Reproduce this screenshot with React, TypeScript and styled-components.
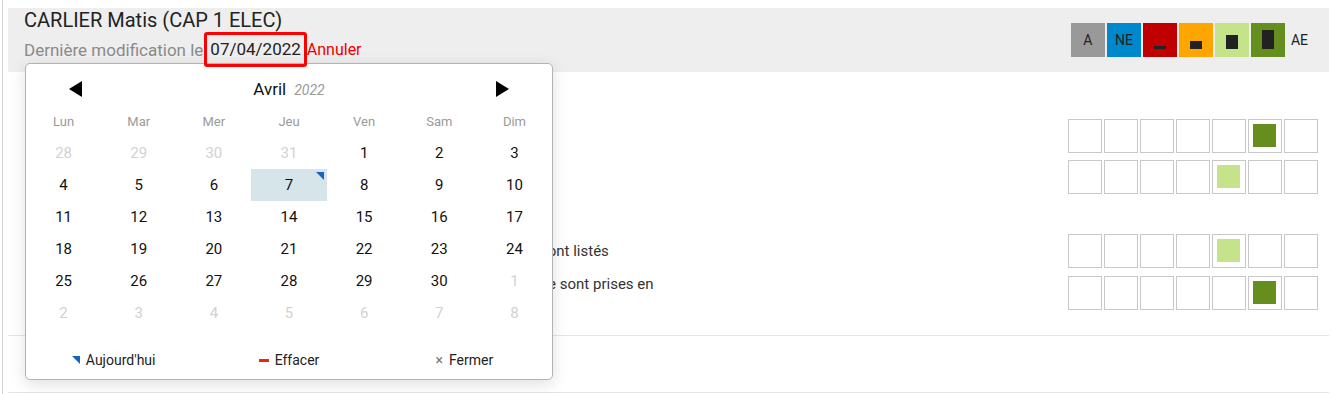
import styled, { createGlobalStyle } from 'styled-components';

const GlobalStyle = createGlobalStyle`
  body {
    margin: 0;
    background: #fff;
    font-family: Roboto, "Liberation Sans", sans-serif;
    color: #222;
  }
`;

const Frame = styled.div`
  margin-left: 2px;
  border-left: 1px solid #d4d4d4;
  padding: 8px 2px 0 5px;
  min-height: 394px;
  box-sizing: border-box;
`;

const Header = styled.header`
  position: relative;
  height: 64px;
  background: #eeeeee;
  display: flex;
  justify-content: space-between;
  padding: 0 21px 0 16px;
`;

const Student = styled.div`
  display: flex;
  flex-direction: column;
`;

const Title = styled.div`
  font-size: 20px;
  line-height: 25px;
  color: #222;
`;

const SubLine = styled.div`
  display: flex;
  align-items: center;
  margin-top: -1px;
  font-size: 17px;
  color: #8a8a8a;
`;

const DateBox = styled.span`
  position: relative;
  z-index: 3;
  margin-left: 1px;
  padding: 0 3px;
  line-height: 29px;
  border: 3px solid #ff0000;
  border-radius: 3px;
  color: #222;
`;

const CancelLink = styled.span`
  font-size: 16px;
  color: #ee0000;
`;

const Legend = styled.div`
  align-self: center;
  display: flex;
  align-items: center;
  gap: 2px;
`;

const LegendBox = styled.div<{ $bg: string }>`
  width: 34px;
  height: 34px;
  background: ${(p) => p.$bg};
  display: flex;
  align-items: center;
  justify-content: center;
  font-size: 14px;
  color: #222;
`;

const LevelBox = styled(LegendBox)`
  align-items: flex-end;
  padding-bottom: 8px;
  box-sizing: border-box;
`;

const LevelBar = styled.span<{ $h: number }>`
  width: 12px;
  height: ${(p) => p.$h}px;
  background: #222;
`;

const LegendText = styled.span`
  margin-left: 4px;
  font-size: 14px;
  color: #222;
`;

/* calendar popup */
const Picker = styled.div`
  position: absolute;
  z-index: 2;
  left: 17px;
  top: 55px;
  width: 528px;
  box-sizing: border-box;
  padding-top: 8px;
  background: #fff;
  border: 1px solid #b3b3b3;
  border-radius: 5px;
  box-shadow: 0 4px 16px rgba(0, 0, 0, 0.13);
`;

const Nav = styled.div`
  height: 34px;
  display: flex;
  align-items: center;
  justify-content: space-between;
  padding: 0 43px;
`;

const Arrow = styled.svg`
  width: 13px;
  height: 16px;
  display: block;
`;

const MonthLabel = styled.div`
  display: flex;
  align-items: baseline;
  gap: 8px;
  font-size: 17px;
  color: #111;
`;

const YearLabel = styled.span`
  font-size: 14px;
  font-style: italic;
  color: #9a9a9a;
`;

const WeekGrid = styled.div`
  display: grid;
  grid-template-columns: repeat(7, 1fr);
`;

const WeekDay = styled.div`
  text-align: center;
  line-height: 31px;
  font-size: 13px;
  color: #9a9a9a;
`;

const Day = styled.div<{ $muted?: boolean; $selected?: boolean }>`
  position: relative;
  height: 32px;
  line-height: 32px;
  text-align: center;
  font-size: 15px;
  color: ${(p) => (p.$muted ? '#d2d2d2' : '#111')};
  background: ${(p) => (p.$selected ? '#d6e5e9' : 'transparent')};
`;

const TodayMark = styled.span`
  display: inline-block;
  width: 0;
  height: 0;
  border-top: 8px solid #1565c0;
  border-left: 8px solid transparent;
`;

const CornerMark = styled(TodayMark)`
  position: absolute;
  top: 3px;
  right: 3px;
`;

const Footer = styled.div`
  display: grid;
  grid-template-columns: repeat(3, 1fr);
  padding: 21px 0 9px;
`;

const FooterItem = styled.div`
  display: flex;
  align-items: center;
  justify-content: center;
  gap: 6px;
  font-size: 14px;
  line-height: 20px;
  color: #222;
`;

const ClearMark = styled.span`
  width: 10px;
  height: 3px;
  background: #e8290b;
`;

const CloseMark = styled.span`
  font-size: 14px;
  color: #777;
`;

/* evaluation grid */
const Section = styled.section<{ $empty?: boolean }>`
  border-bottom: 1px solid #e6e6e6;
  padding: ${(p) => (p.$empty ? '0' : '7px 11px 24px 16px')};
  height: ${(p) => (p.$empty ? '56px' : 'auto')};
`;

const Group = styled.div`
  display: flex;
  flex-direction: column;
  gap: 7px;
`;

const GroupTitle = styled.div`
  height: 33px;
  line-height: 33px;
  padding-left: 16px;
  font-size: 15px;
  font-weight: 500;
  color: #333;
`;

const Row = styled.div`
  display: flex;
  align-items: center;
  min-height: 34px;
  gap: 20px;
`;

const Label = styled.div`
  flex: 1;
  max-width: 630px;
  margin-right: auto;
  padding-left: 18px;
  font-size: 15px;
  line-height: 18px;
  color: #333;
`;

const Cells = styled.div`
  display: flex;
  gap: 2px;
  margin-left: auto;
`;

const Cell = styled.div`
  width: 34px;
  height: 34px;
  box-sizing: border-box;
  border: 1px solid #c8c8c8;
  padding: 4px;
`;

const Fill = styled.div<{ $bg: string }>`
  width: 23px;
  height: 23px;
  background: ${(p) => p.$bg};
`;

const LEVEL_COLORS = ['#999999', '#0088cc', '#c00000', '#ffa500', '#c5e38b', '#668e1e'];

const LEVELS: { bg: string; text?: string; bar?: number }[] = [
  { bg: LEVEL_COLORS[0], text: 'A' },
  { bg: LEVEL_COLORS[1], text: 'NE' },
  { bg: LEVEL_COLORS[2], bar: 3 },
  { bg: LEVEL_COLORS[3], bar: 8 },
  { bg: LEVEL_COLORS[4], bar: 14 },
  { bg: LEVEL_COLORS[5], bar: 19 },
];

const WEEK_DAYS = ['Lun', 'Mar', 'Mer', 'Jeu', 'Ven', 'Sam', 'Dim'];

// avril 2022, semaine commençant le lundi
const WEEKS: { d: number; muted?: boolean }[][] = [
  [{ d: 28, muted: true }, { d: 29, muted: true }, { d: 30, muted: true }, { d: 31, muted: true }, { d: 1 }, { d: 2 }, { d: 3 }],
  [4, 5, 6, 7, 8, 9, 10].map((d) => ({ d })),
  [11, 12, 13, 14, 15, 16, 17].map((d) => ({ d })),
  [18, 19, 20, 21, 22, 23, 24].map((d) => ({ d })),
  [{ d: 25 }, { d: 26 }, { d: 27 }, { d: 28 }, { d: 29 }, { d: 30 }, { d: 1, muted: true }],
  [2, 3, 4, 5, 6, 7, 8].map((d) => ({ d, muted: true })),
];

interface Criterion {
  label: string;
  level: number; // index in the 7 cells
}

const GROUPS: { id: string; items: Criterion[] }[] = [
  {
    id: 'prep',
    items: [
      { label: "Identifier l'installation", level: 5 },
      { label: 'Repérer les risques', level: 4 },
    ],
  },
  {
    id: 'orga',
    items: [
      { label: 'Les matériels, outils et équipements de protection individuelle et collective sont listés', level: 4 },
      {
        label: "Les règles d'hygiène, de sécurité et de protection de l'environnement du poste sont prises en compte",
        level: 5,
      },
    ],
  },
];

const Calendar = () => (
  <Picker>
    <Nav>
      <Arrow viewBox="0 0 13 16">
        <polygon points="13,0 13,16 0,8" fill="#000" />
      </Arrow>
      <MonthLabel>
        Avril <YearLabel>2022</YearLabel>
      </MonthLabel>
      <Arrow viewBox="0 0 13 16">
        <polygon points="0,0 0,16 13,8" fill="#000" />
      </Arrow>
    </Nav>
    <WeekGrid>
      {WEEK_DAYS.map((w) => (
        <WeekDay key={w}>{w}</WeekDay>
      ))}
      {WEEKS.flat().map((day, i) => {
        const selected = !day.muted && day.d === 7;
        return (
          <Day key={i} $muted={day.muted} $selected={selected}>
            {day.d}
            {selected && <CornerMark />}
          </Day>
        );
      })}
    </WeekGrid>
    <Footer>
      <FooterItem>
        <TodayMark />
        Aujourd'hui
      </FooterItem>
      <FooterItem>
        <ClearMark />
        Effacer
      </FooterItem>
      <FooterItem>
        <CloseMark>×</CloseMark>
        Fermer
      </FooterItem>
    </Footer>
  </Picker>
);

export default function App() {
  return (
    <>
      <GlobalStyle />
      <Frame>
        <Header>
          <Student>
            <Title>CARLIER Matis (CAP 1 ELEC)</Title>
            <SubLine>
              Dernière modification le
              <DateBox>07/04/2022</DateBox>
              <CancelLink>Annuler</CancelLink>
            </SubLine>
          </Student>
          <Legend>
            {LEVELS.map((l, i) =>
              l.bar ? (
                <LevelBox key={i} $bg={l.bg}>
                  <LevelBar $h={l.bar} />
                </LevelBox>
              ) : (
                <LegendBox key={i} $bg={l.bg}>
                  {l.text}
                </LegendBox>
              ),
            )}
            <LegendText>AE</LegendText>
          </Legend>
          <Calendar />
        </Header>

        <Section>
          {GROUPS.map((g) => (
            <Group key={g.id}>
              <GroupTitle />
              {g.items.map((c) => (
                <Row key={c.label}>
                  <Label>{c.label}</Label>
                  <Cells>
                    {Array.from({ length: 7 }).map((_, i) => (
                      <Cell key={i}>{i === c.level && <Fill $bg={LEVEL_COLORS[c.level]} />}</Cell>
                    ))}
                  </Cells>
                </Row>
              ))}
            </Group>
          ))}
        </Section>
        <Section $empty />
      </Frame>
    </>
  );
}
